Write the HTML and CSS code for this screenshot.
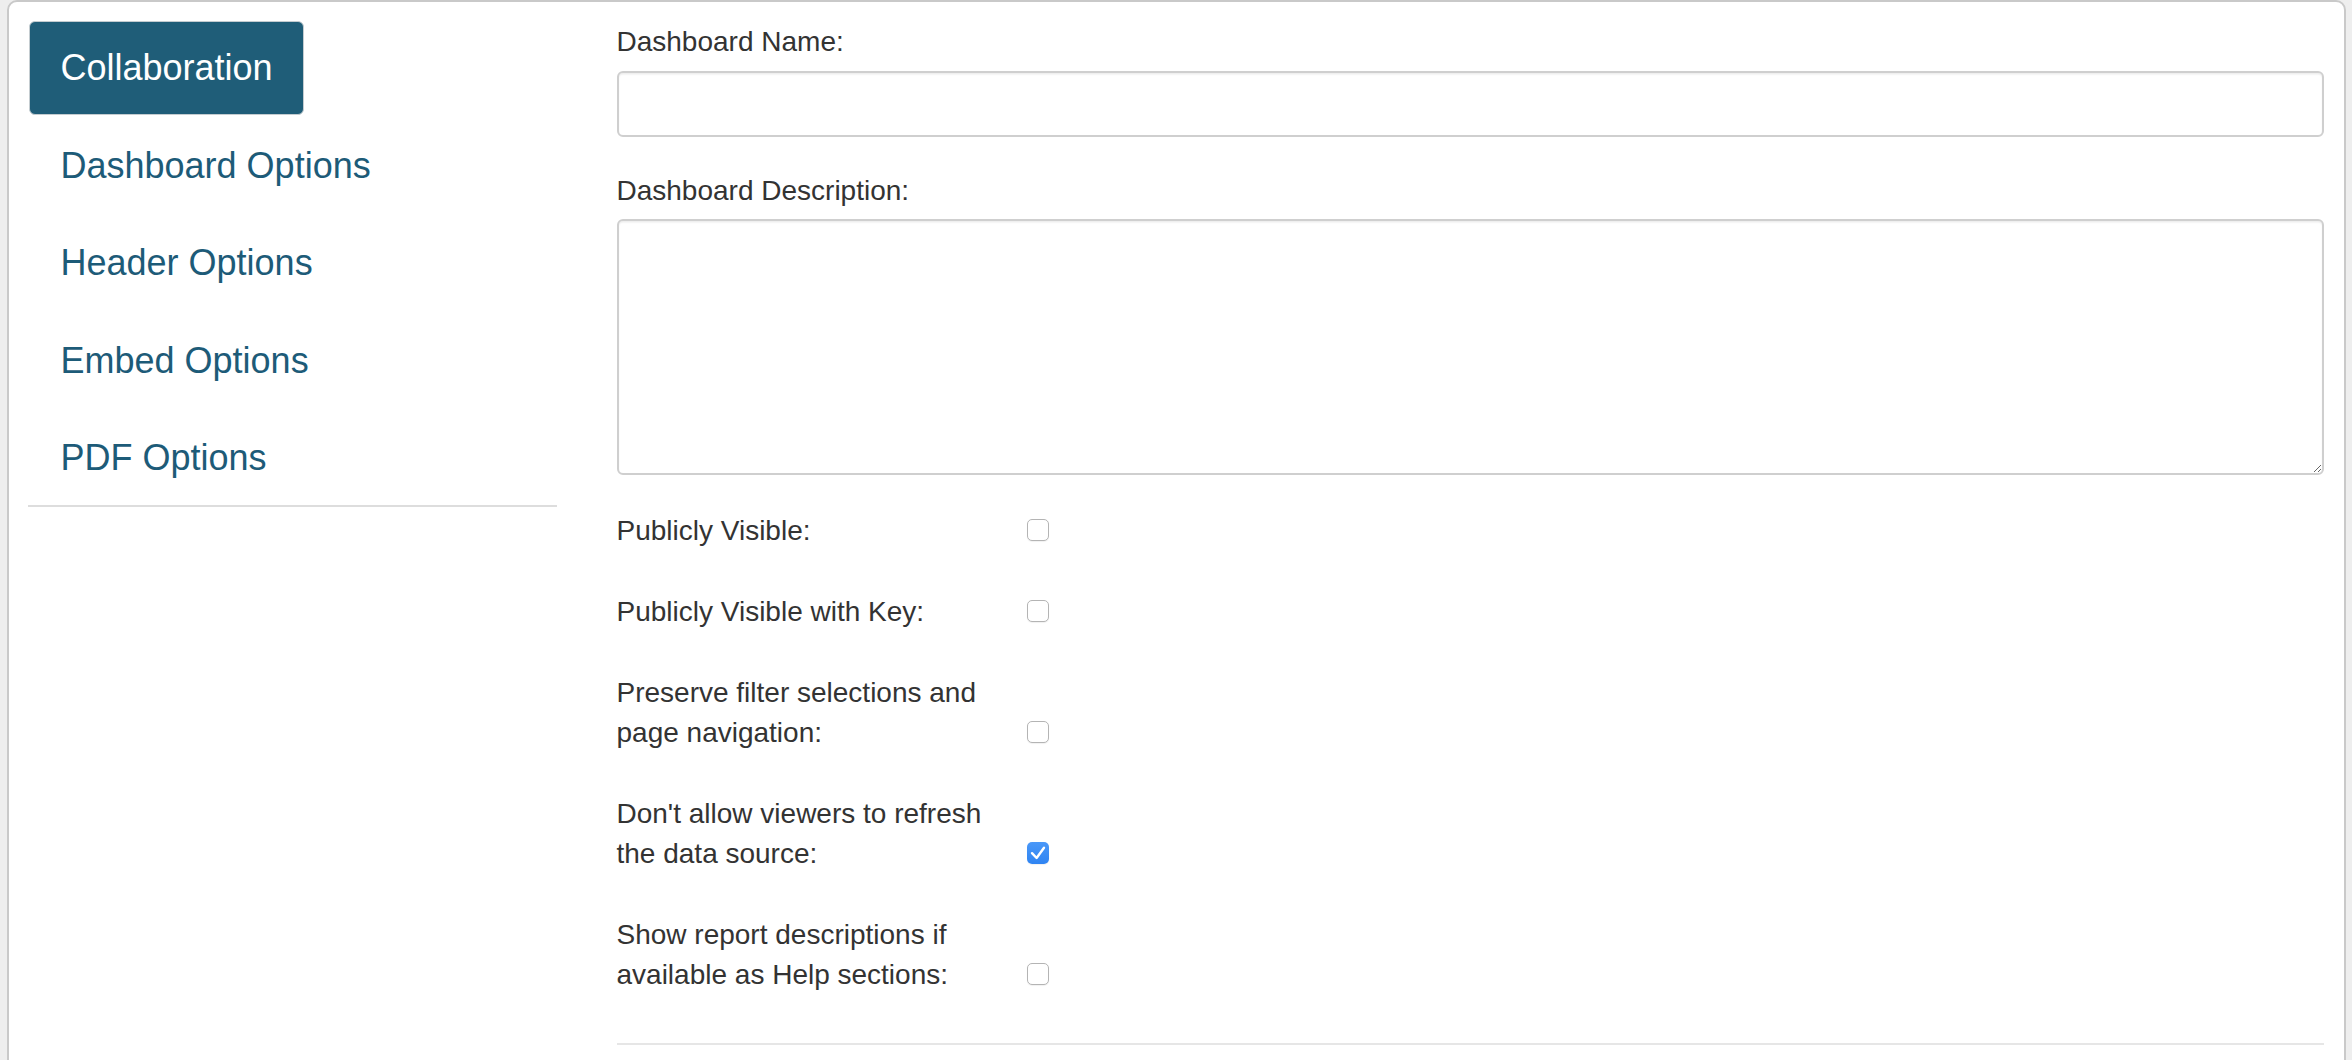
FILE: index.html
```html
<!DOCTYPE html>
<html>
<head>
<meta charset="utf-8">
<link rel="stylesheet" href="styles.css">
</head>
<body>
<div class="panel">
  <nav class="side-nav">
    <a class="nav-item active">Collaboration</a>
    <a class="nav-item">Dashboard Options</a>
    <a class="nav-item">Header Options</a>
    <a class="nav-item">Embed Options</a>
    <a class="nav-item">PDF Options</a>
  </nav>
  <main class="form">
    <label class="field-label">Dashboard Name:</label>
    <input class="text-input" type="text">
    <label class="field-label">Dashboard Description:</label>
    <textarea class="text-area"></textarea>
    <div class="check-rows">
      <div class="check-row">
        <span class="check-label">Publicly Visible:</span>
        <span class="checkbox"></span>
      </div>
      <div class="check-row">
        <span class="check-label">Publicly Visible with Key:</span>
        <span class="checkbox"></span>
      </div>
      <div class="check-row">
        <span class="check-label">Preserve filter selections and page navigation:</span>
        <span class="checkbox"></span>
      </div>
      <div class="check-row">
        <span class="check-label">Don't allow viewers to refresh the data source:</span>
        <span class="checkbox checked"><svg viewBox="0 0 22 22" width="22" height="22"><path d="M5 11.2 L9.6 16 L17 5.8" fill="none" stroke="#fff" stroke-width="2.4" stroke-linecap="round" stroke-linejoin="round"/></svg></span>
      </div>
      <div class="check-row">
        <span class="check-label">Show report descriptions if available as Help sections:</span>
        <span class="checkbox"></span>
      </div>
    </div>
    <div class="divider"></div>
  </main>
</div>
</body>
</html>
```
FILE: styles.css
```css
html, body {
  margin: 0;
  padding: 0;
  height: 100%;
  overflow: hidden;
}
body {
  background: #eeeeee;
  font-family: "Liberation Sans", Arial, Helvetica, sans-serif;
  color: #333333;
}
.panel {
  margin: 0 6px 0 7px;
  height: 1120px;
  box-sizing: border-box;
  background: #ffffff;
  border: 2px solid #c9c9c9;
  border-radius: 10px 10px 0 0;
  padding: 19px 20.5px 0 19px;
  display: grid;
  grid-template-columns: 529px 1fr;
  column-gap: 59.5px;
  align-items: start;
}
.side-nav {
  display: flex;
  flex-direction: column;
  align-items: flex-start;
  gap: 3.6px;
  border-bottom: 2px solid #dddddd;
}
.nav-item {
  display: block;
  font-size: 36px;
  line-height: 52px;
  padding: 20px 30.5px;
  margin-left: 1px;
  border: 1px solid transparent;
  border-radius: 6px;
  color: #1d5b78;
  text-decoration: none;
}
.nav-item.active {
  background: #1f5d78;
  color: #ffffff;
  border-color: #c4ccd0;
}
.form {
  display: flex;
  flex-direction: column;
}
.field-label {
  display: block;
  font-size: 28px;
  line-height: 40px;
  padding-top: 1px;
  margin-bottom: 8.5px;
}
.text-input, .text-area {
  display: block;
  box-sizing: border-box;
  width: 100%;
  border: 2px solid #cfcfcf;
  border-radius: 6px;
  background: #fff;
  box-shadow: inset 0 1.5px 1.5px rgba(0,0,0,0.075);
  font: inherit;
  font-size: 28px;
  margin: 0;
}
.text-input {
  height: 66px;
  margin-bottom: 33px;
}
.text-area {
  height: 256px;
  resize: vertical;
  margin-bottom: 35.5px;
}
.check-rows {
  display: flex;
  flex-direction: column;
  gap: 41px;
}
.check-row {
  display: grid;
  grid-template-columns: 410px 22px;
  align-items: end;
}
.check-label {
  font-size: 28px;
  line-height: 40px;
  padding-right: 20px;
}
.checkbox {
  width: 22px;
  height: 22px;
  box-sizing: border-box;
  border: 1.5px solid #b4b4b4;
  border-radius: 5px;
  background: #fff;
  box-shadow: 0 1px 1px rgba(0,0,0,0.06);
  margin-bottom: 10px;
  display: block;
}
.checkbox.checked {
  border: none;
  background: linear-gradient(#4a98f8, #2f84f2);
}
.checkbox svg {
  display: block;
}
.divider {
  height: 2px;
  background: #e6e6e6;
  margin-top: 48.5px;
}
```
